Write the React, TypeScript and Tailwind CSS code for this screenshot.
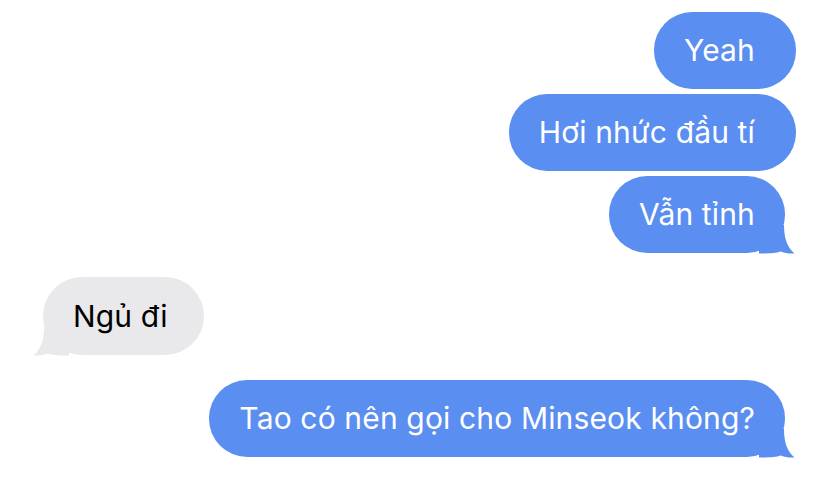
const BLUE = "#5a8ef0";

function Tail({ left, color }: { left?: boolean; color: string }) {
  return (
    <svg
      width="36"
      height="29"
      viewBox="0 0 36 29"
      className={left ? "absolute left-[-10px] bottom-[-1px] -scale-x-100" : "absolute right-[-10px] bottom-[-1px]"}
    >
      <path
        d="M0 0 H25 C25 13 28 22 35.5 28.5 C30 28.8 25 28 21.5 26.5 C17 28 12 28.5 0 28.5 Z"
        fill={color}
      />
    </svg>
  );
}

function Sent({ text, tail }: { text: string; tail?: boolean }) {
  return (
    <div
      className={
        tail
          ? "relative h-[77px] flex items-center rounded-[38px] bg-[#5a8ef0] text-white px-[30px] mr-[11px]"
          : "relative h-[77px] flex items-center rounded-[38px] bg-[#5a8ef0] text-white pl-[30px] pr-[41px]"
      }
    >
      <span>{text}</span>
      {tail && <Tail color={BLUE} />}
    </div>
  );
}

export default function App() {
  return (
    <div
      className="w-[828px] h-[479px] bg-white flex flex-col pt-[12px] text-[30px] tracking-[0.15px]"
      style={{ fontFamily: "Inter, 'Noto Sans', sans-serif" }}
    >
      <div className="flex flex-col items-end gap-[5px] pr-[32px]">
        <Sent text="Yeah" />
        <Sent text="Hơi nhức đầu tí" />
        <Sent text="Vẫn tỉnh" tail />
      </div>
      <div className="flex pl-[43px] mt-[24px]">
        <div className="relative h-[78px] flex items-center rounded-[39px] bg-[#e9e9eb] text-black pl-[30px] pr-[36px]">
          <span>Ngủ đi</span>
          <Tail left color="#e9e9eb" />
        </div>
      </div>
      <div className="flex justify-end pr-[32px] mt-[25px]">
        <Sent text="Tao có nên gọi cho Minseok không?" tail />
      </div>
    </div>
  );
}
